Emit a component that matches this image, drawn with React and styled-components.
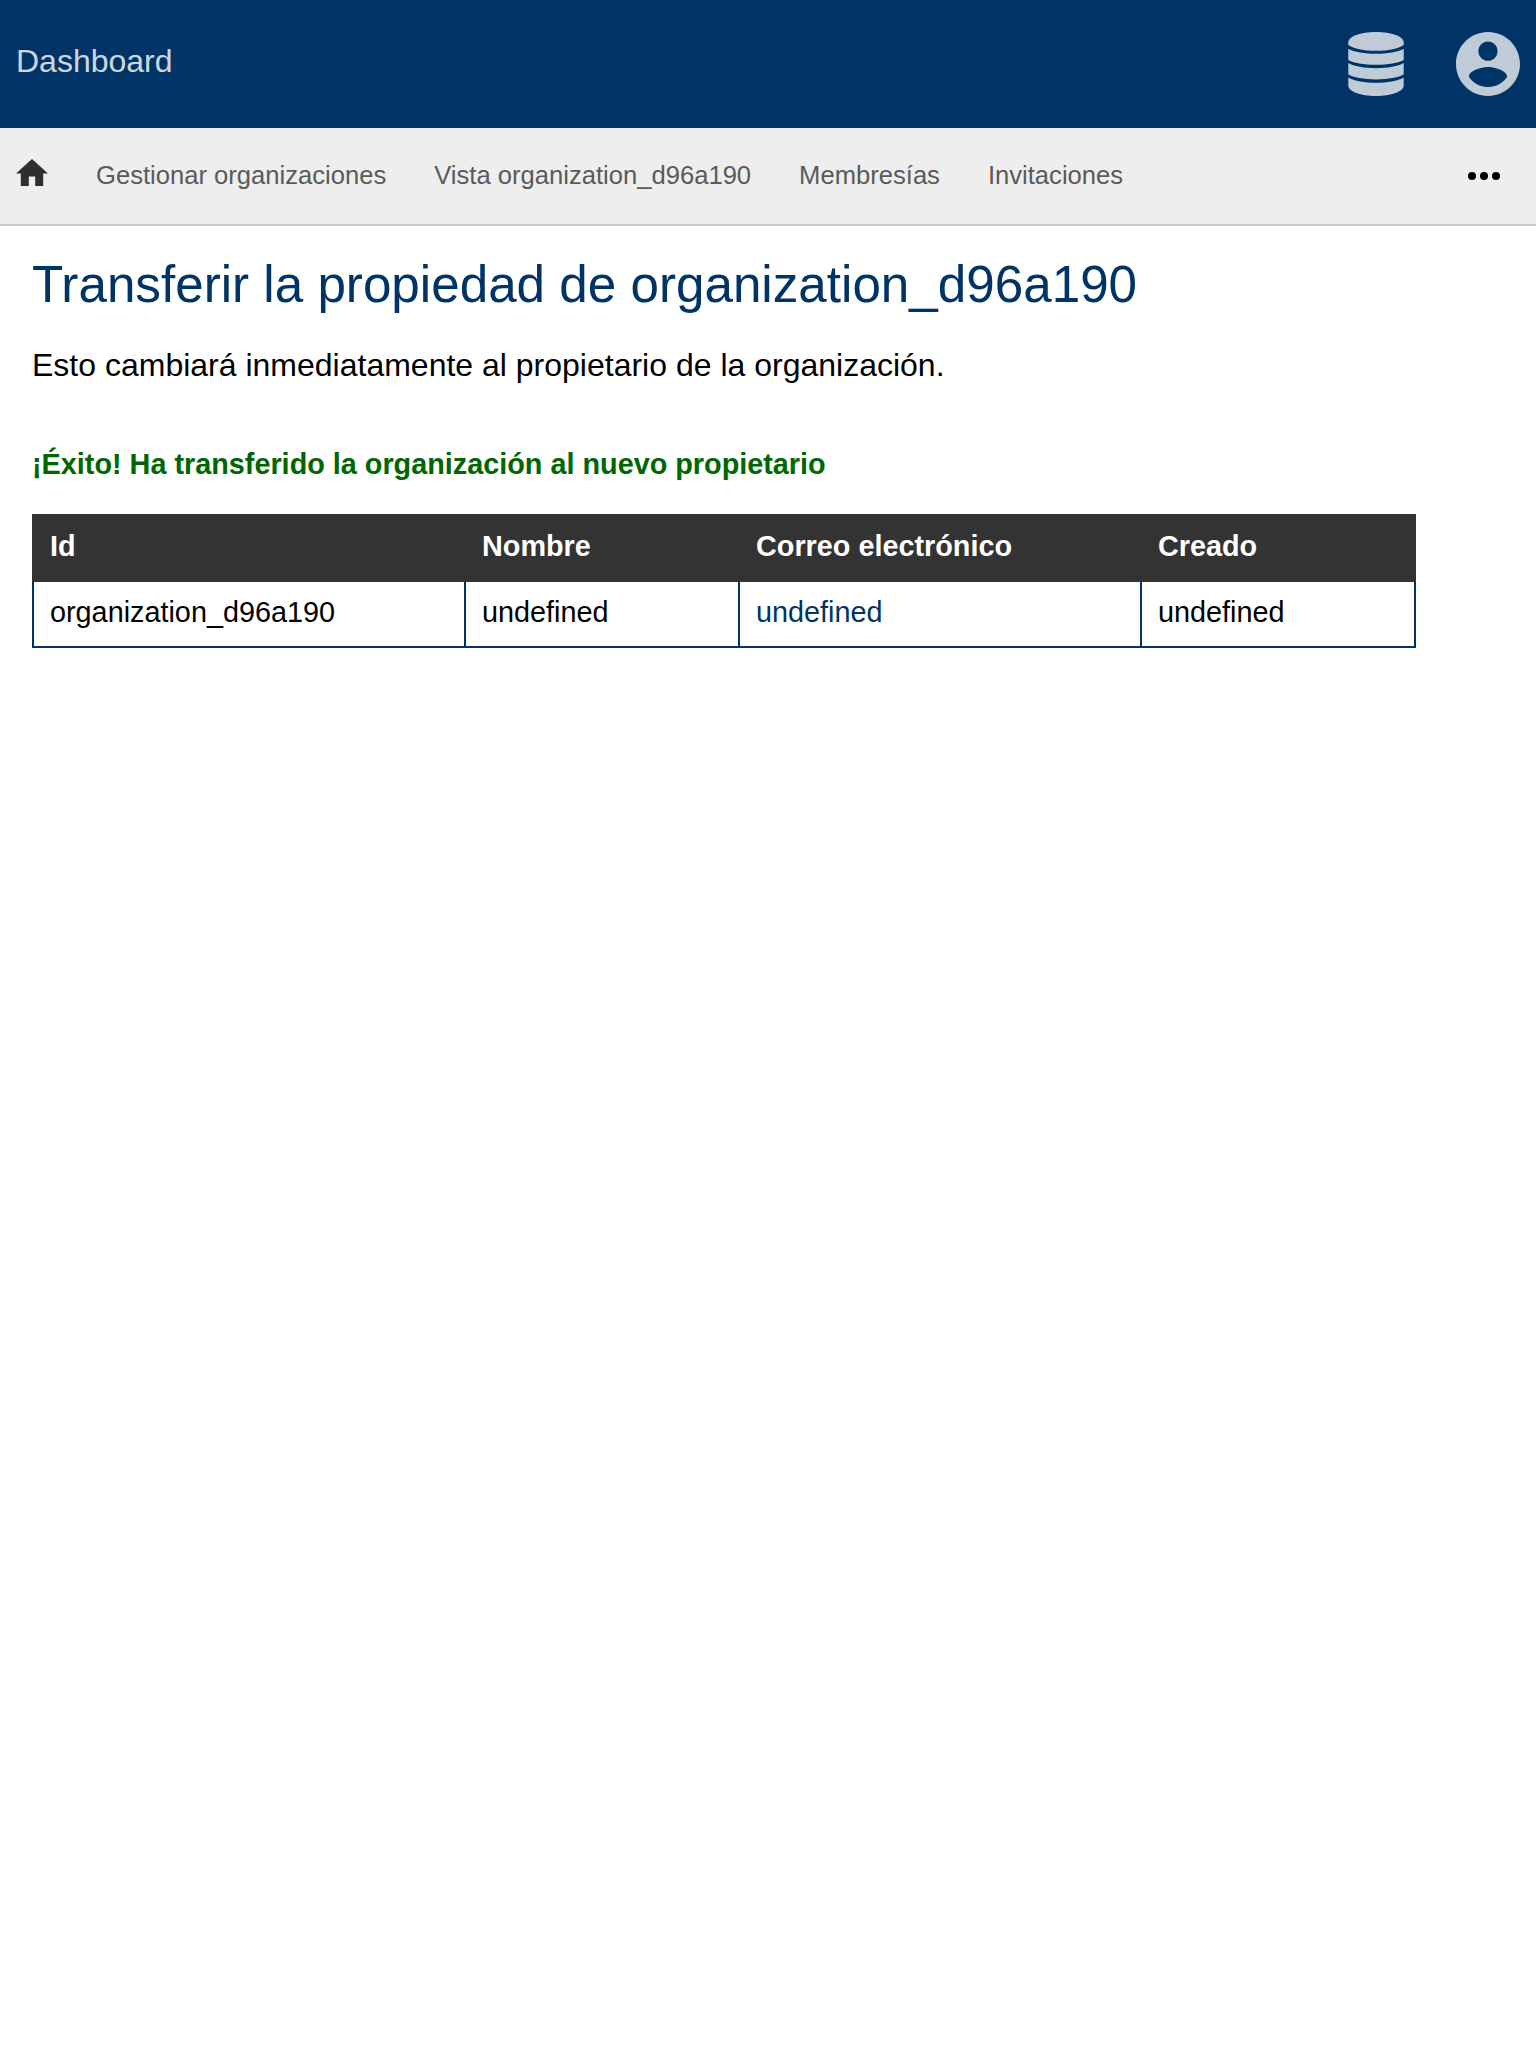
import React from 'react';
import styled, { createGlobalStyle } from 'styled-components';

const GlobalStyle = createGlobalStyle`
  * { box-sizing: border-box; }
  body {
    margin: 0;
    background: #fff;
    color: #000;
    font-family: "Liberation Sans", Arial, sans-serif;
  }
  a { text-decoration: none; }
`;

const Header = styled.header`
  display: flex;
  align-items: center;
  height: 128px;
  padding: 0 16px;
  background: #003366;
`;

const Brand = styled.a`
  margin-right: auto;
  padding-bottom: 6px;
  color: #fff;
  font-size: 32px;
  line-height: 40px;
  opacity: 0.8;
`;

const HeaderButton = styled.a`
  display: flex;
  justify-content: center;
  width: 64px;
  margin-left: 48px;
  color: #fff;
  opacity: 0.75;

  svg { display: block; height: 64px; fill: currentColor; }
`;

const Nav = styled.nav`
  display: flex;
  align-items: center;
  height: 98px;
  padding: 0 36px 2px 16px;
  background: #eeeeee;
  border-bottom: 2px solid #cccccc;
`;

const HomeLink = styled.a`
  display: flex;
  width: 32px;
  padding-bottom: 5.2px;
  color: #2e2e2e;

  svg { display: block; width: 32px; height: 27.2px; fill: currentColor; }
`;

const NavLink = styled.a`
  margin-left: 48px;
  color: #5a5a5a;
  font-size: 25.6px;
  line-height: 32px;
`;

const More = styled.button`
  display: flex;
  gap: 4px;
  margin: 2px 0 0 auto;
  padding: 0;
  border: 0;
  background: none;
`;

const Dot = styled.span`
  width: 8px;
  height: 8px;
  border-radius: 50%;
  background: #000;
`;

const Main = styled.main`
  padding: 30px 32px;
`;

const Title = styled.h1`
  margin: 0;
  color: #003366;
  font-size: 51.2px;
  font-weight: 400;
  line-height: 57px;
`;

const Lead = styled.p`
  margin: 34px 0 0;
  font-size: 32px;
  line-height: 36px;
`;

const Success = styled.div`
  margin-top: 65px;
  color: #006600;
  font-size: 28.8px;
  font-weight: 700;
  line-height: 32px;
`;

const Table = styled.table`
  width: 1384px;
  margin-top: 34px;
  table-layout: fixed;
  border-collapse: collapse;
  font-size: 28.8px;
  line-height: 32px;
  text-align: left;
`;

const HeadCell = styled.th`
  width: ${(p) => p.$width}px;
  height: 66px;
  padding: 0 16px 4px;
  border: 2px solid #333333;
  background: #333333;
  color: #fff;
`;

const Cell = styled.td`
  height: 66px;
  padding: 0 16px 4px;
  border: 2px solid #003366;
  border-top-color: #333333;
`;

const CellLink = styled.a`
  color: #003366;
`;

const navItems = ['Gestionar organizaciones', 'Vista organization_d96a190', 'Membresías', 'Invitaciones'];

const columns = [
  { label: 'Id', width: 432 },
  { label: 'Nombre', width: 274 },
  { label: 'Correo electrónico', width: 402 },
  { label: 'Creado', width: 274 },
];

const DatabaseIcon = () => (
  <svg viewBox="0 0 56 64" width="56">
    <path d="M.3 10C.8 4.400 12.500 0 28 0s27.200 4.400 27.700 10v3C50.500 16.700 40 18.800 28 18.800S5.500 16.700.3 13z" />
    <path d="M.3 16.700C6 19.900 16.500 21.700 28 21.700s22-1.800 27.700-5V28C51 31 40 32.800 28 32.800S5 31 .3 28z" />
    <path d="M.3 31C6 34.200 16.500 36.200 28 36.200s22-2 27.700-5.200V42.300C51 45.600 40 47.400 28 47.400S5 45.600.3 42.300z" />
    <path d="M.3 45.400C6 48.700 16.500 50.800 28 50.800s22-2.100 27.700-5.400V54C55 59.600 43.500 64 28 64S1 59.600.3 54z" />
  </svg>
);

const AccountIcon = () => (
  <svg viewBox="2 2 20 20" width="64">
    <path d="M12 2C6.480 2 2 6.480 2 12s4.480 10 10 10 10-4.480 10-10S17.520 2 12 2zm0 3c1.660 0 3 1.340 3 3s-1.340 3-3 3-3-1.340-3-3 1.340-3 3-3zm0 14.200c-2.500 0-4.710-1.280-6-3.220.030-1.990 4-3.080 6-3.080 1.990 0 5.970 1.090 6 3.080-1.290 1.940-3.500 3.220-6 3.220z" />
  </svg>
);

const HomeIcon = () => (
  <svg viewBox="2 3 20 17">
    <path d="M10 20v-6h4v6h5v-8h3L12 3 2 12h3v8z" />
  </svg>
);

export default function App() {
  return (
    <>
      <GlobalStyle />
      <Header>
        <Brand href="#">Dashboard</Brand>
        <HeaderButton href="#" aria-label="Base de datos"><DatabaseIcon /></HeaderButton>
        <HeaderButton href="#" aria-label="Cuenta"><AccountIcon /></HeaderButton>
      </Header>
      <Nav>
        <HomeLink href="#" aria-label="Inicio"><HomeIcon /></HomeLink>
        {navItems.map((item) => <NavLink href="#" key={item}>{item}</NavLink>)}
        <More aria-label="Más"><Dot /><Dot /><Dot /></More>
      </Nav>
      <Main>
        <Title>Transferir la propiedad de organization_d96a190</Title>
        <Lead>Esto cambiará inmediatamente al propietario de la organización.</Lead>
        <Success>¡Éxito! Ha transferido la organización al nuevo propietario</Success>
        <Table>
          <thead>
            <tr>
              {columns.map((c) => <HeadCell key={c.label} $width={c.width}>{c.label}</HeadCell>)}
            </tr>
          </thead>
          <tbody>
            <tr>
              <Cell>organization_d96a190</Cell>
              <Cell>undefined</Cell>
              <Cell><CellLink href="#">undefined</CellLink></Cell>
              <Cell>undefined</Cell>
            </tr>
          </tbody>
        </Table>
      </Main>
    </>
  );
}
